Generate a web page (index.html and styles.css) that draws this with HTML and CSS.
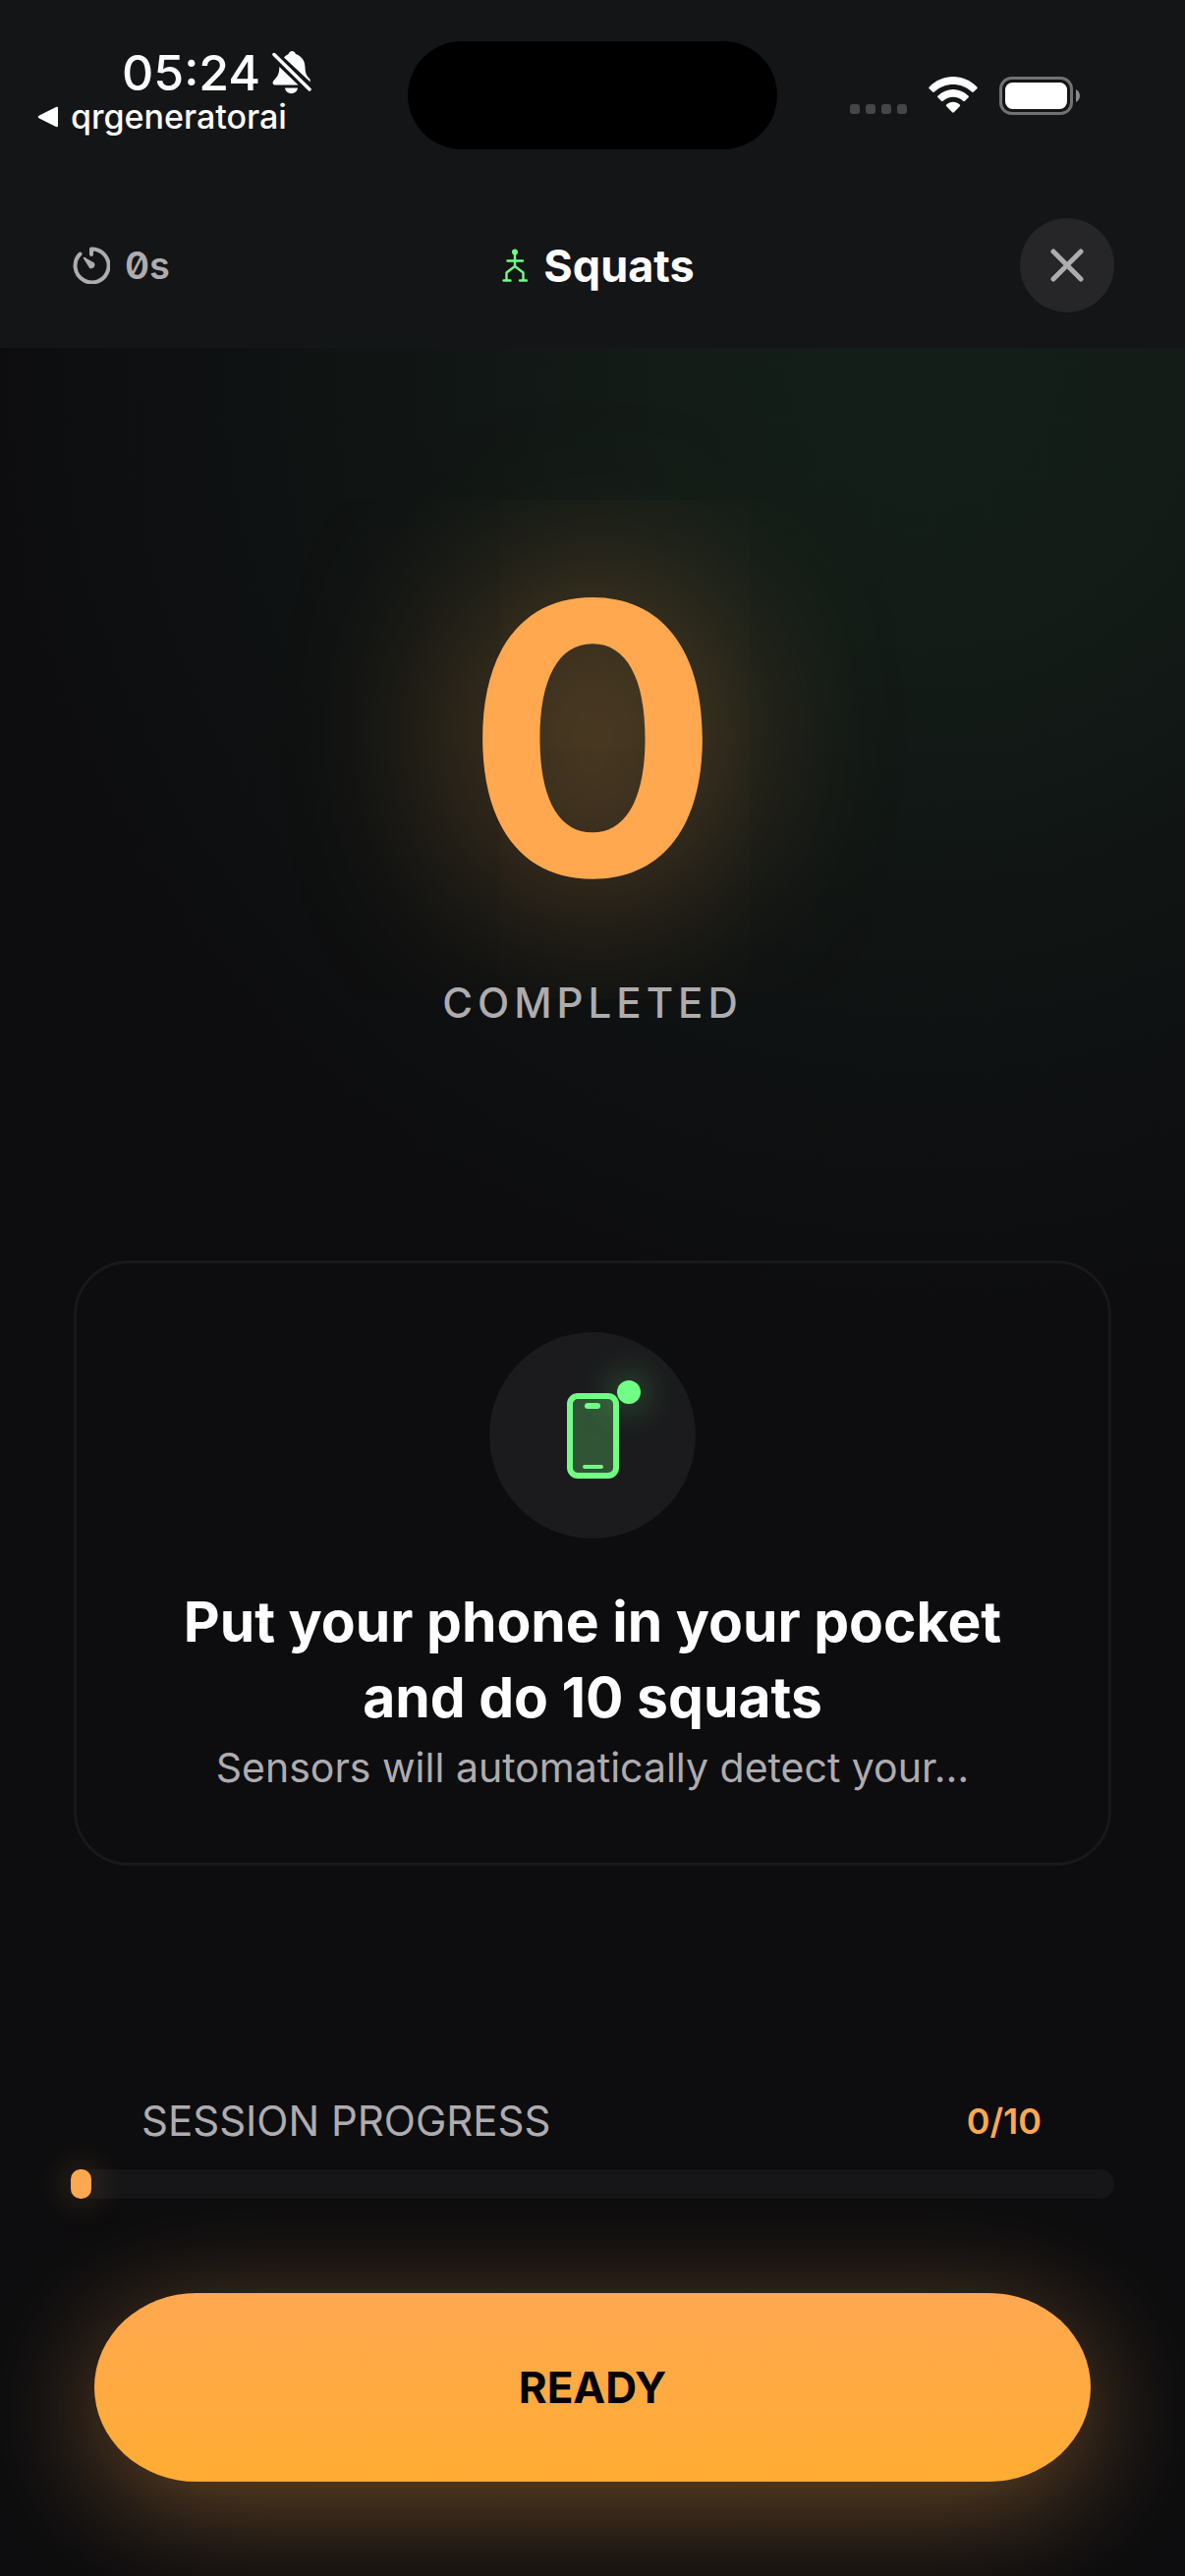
FILE: index.html
```html
<!DOCTYPE html>
<html lang="en">
<head>
  <meta charset="utf-8">
  <meta name="viewport" content="width=device-width, initial-scale=1">
  <title>Squats</title>
  <link rel="stylesheet" href="styles.css">
</head>
<body>
  <div class="top">
    <div class="status-bar">
      <div class="status-left">
        <div class="clock">
          <span>05:24</span>
          <svg class="bell-icon" viewBox="0 0 40 44" aria-hidden="true">
            <path d="M12 6.500C14 4 16 3.500 16.500 3c1.500-4 6-4 7.500 0 7 2.500 9.500 8 9.500 14 0 5 1.500 8.500 5 11.500l.3 3z" fill="#fff"/>
            <path d="M7.300 16 26.500 34.500H3C.5 34.500-.3 32 1.500 30c4-4 5.800-7 5.800-14z" fill="#fff"/>
            <path d="M13 37.500h13c-1 7.500-12 7.500-13 0z" fill="#fff"/>
            <path d="M2 3.500 38 39" stroke="#fff" stroke-width="3.500" stroke-linecap="round"/>
          </svg>
        </div>
        <a class="back-link" href="#">
          <svg class="back-icon" viewBox="0 0 22 22" aria-hidden="true"><path d="M2 9.500 19 1c1.500-.6 2 0 2 1.500v17c0 1.500-.5 2-2 1.500L2 12.500c-1.700-1-1.700-2 0-3z" fill="#fff"/></svg>
          <span>qrgeneratorai</span>
        </a>
      </div>
      <div class="island"></div>
      <div class="status-right">
        <svg class="signal-icon" viewBox="0 0 58 10" aria-hidden="true">
          <g fill="#464648"><rect width="10" height="10" rx="3"/><rect x="16" width="10" height="10" rx="3"/><rect x="32" width="10" height="10" rx="3"/><rect x="48" width="10" height="10" rx="3"/></g>
        </svg>
        <svg class="wifi-icon" viewBox="0 0 50 38" aria-hidden="true">
          <g fill="#fff">
            <path d="M.7 10.500C14-3.500 36-3.500 49.300 10.500c.6.600.6 1.200 0 1.700l-3.400 3.400c-.6.600-1.200.6-1.800 0-10.500-10.300-27.700-10.300-38.200 0-.6.600-1.200.6-1.800 0L.7 12.200c-.6-.5-.6-1.100 0-1.700z"/>
            <path d="M9.500 19.500c8.500-8.700 22.500-8.700 31 0 .6.600.6 1.200 0 1.800L37 24.700c-.6.600-1.200.6-1.800 0-5.800-5.200-14.600-5.200-20.400 0-.6.600-1.200.6-1.800 0l-3.500-3.400c-.6-.6-.6-1.200 0-1.800z"/>
            <path d="M18.300 28.500c3.900-3.700 9.500-3.700 13.400 0 .7.600.7 1.200 0 1.800l-5.800 6c-.6.600-1.200.6-1.800 0l-5.800-6c-.7-.6-.7-1.200 0-1.800z"/>
          </g>
        </svg>
        <svg class="battery-icon" viewBox="0 0 82 39" aria-hidden="true">
          <rect x="1.500" y="1.500" width="72" height="36" rx="11" fill="none" stroke="#727274" stroke-width="3"/>
          <rect x="6" y="6" width="63" height="27" rx="7.500" fill="#fff"/>
          <path d="M78 13c5.300 2.500 5.300 10.500 0 13z" fill="#8a8a8b"/>
        </svg>
      </div>
    </div>

    <header class="header">
      <div class="timer">
        <svg class="timer-icon" viewBox="0 0 38 38" fill="none" aria-hidden="true">
          <path d="M7.500 7.500A17 17 0 1 0 19 2.500V8" stroke="#aeacaf" stroke-width="4" stroke-linecap="round" stroke-linejoin="round"/>
          <path d="M11.500 11.500 21.500 17.200a3 3 0 0 1-4 4z" fill="#aeacaf" stroke="#aeacaf" stroke-width="1.500" stroke-linejoin="round"/>
        </svg>
        <span>0s</span>
      </div>
      <h1 class="title">
        <svg class="squat-icon" viewBox="0 0 26 34" fill="none" aria-hidden="true">
          <circle cx="13" cy="3.500" r="3" fill="#72fd85"/>
          <path d="M13 5v13.500M5.500 12.500h15.500M13 18 4.500 24.500v8M13 18l8.500 6.500v8M1.500 32.500h7M18 32.500h7" stroke="#72fd85" stroke-width="2.400" stroke-linecap="round" stroke-linejoin="round"/>
        </svg>
        <span>Squats</span>
      </h1>
      <button class="close" type="button" aria-label="Close">
        <svg class="close-icon" viewBox="0 0 34 34" aria-hidden="true"><path d="M3 3l28 28M31 3 3 31" stroke="#aeacaf" stroke-width="5" stroke-linecap="round"/></svg>
      </button>
    </header>
  </div>

  <main class="content">
    <section class="counter">
      <div class="count">0</div>
      <div class="count-label">COMPLETED</div>
    </section>

    <section class="card">
      <div class="phone-badge">
        <svg class="phone-icon" viewBox="0 0 53 87" aria-hidden="true">
          <rect x="3" y="3" width="47" height="81" rx="8" fill="#72fd85" fill-opacity=".25" stroke="#72fd85" stroke-width="6"/>
          <rect x="18" y="10" width="16" height="6" rx="3" fill="#72fd85"/>
          <rect x="16" y="73" width="21" height="4" rx="2" fill="#72fd85"/>
        </svg>
        <span class="phone-dot"></span>
      </div>
      <h2 class="card-title">Put your phone in your pocket and do 10 squats</h2>
      <p class="card-text">Sensors will automatically detect your…</p>
    </section>

    <section class="progress">
      <div class="progress-row">
        <span class="progress-label" id="progress-label">SESSION PROGRESS</span>
        <span class="progress-value">0/10</span>
      </div>
      <div class="progress-track" role="progressbar" aria-labelledby="progress-label" aria-valuemin="0" aria-valuemax="10" aria-valuenow="0">
        <div class="progress-fill" style="width: 2%"></div>
      </div>
    </section>

    <button class="ready" type="button">READY</button>
  </main>
</body>
</html>
```

FILE: styles.css
```css
* {
  box-sizing: border-box;
}

body {
  margin: 0;
  min-height: 100vh;
  display: flex;
  flex-direction: column;
  font-family: Inter, "Liberation Sans", sans-serif;
  color: #fff;
  background-color: #0d0d0f;
  background-image: radial-gradient(circle at 78% 380px, rgba(60, 130, 80, 0.15) 0, rgba(60, 130, 80, 0.13) 260px, rgba(60, 130, 80, 0.06) 580px, transparent 960px);
  overflow-x: hidden;
}

h1,
h2,
p {
  margin: 0;
}

svg {
  display: block;
  flex: none;
}

.top {
  background-color: #141517;
}

/* Status bar */
.status-bar {
  display: grid;
  grid-template-columns: 1fr 376px 1fr;
  align-items: center;
  height: 194px;
}

.status-left {
  padding: 0 0 6px 38px;
}

.clock {
  display: flex;
  align-items: center;
  gap: 12px;
  padding-left: 86px;
  font-size: 50px;
  line-height: 50px;
  font-weight: 500;
}

.bell-icon {
  width: 40px;
  height: 44px;
}

.back-link {
  display: flex;
  align-items: center;
  gap: 12px;
  color: #fff;
  font-size: 34px;
  line-height: 40px;
  font-weight: 500;
  text-decoration: none;
}

.back-icon {
  width: 22px;
  height: 22px;
}

.island {
  height: 110px;
  border-radius: 55px;
  background-color: #000;
}

.status-right {
  display: flex;
  align-items: center;
  gap: 22px;
  padding-left: 74px;
}

.signal-icon {
  width: 58px;
  height: 10px;
  margin-top: 28px;
}

.wifi-icon {
  width: 50px;
  height: 38px;
}

.battery-icon {
  width: 82px;
  height: 39px;
}

/* Header */
.header {
  display: grid;
  grid-template-columns: 1fr auto 1fr;
  align-items: center;
  padding: 28px 72px 36px;
}

.timer {
  display: flex;
  align-items: center;
  gap: 15px;
  padding-left: 2px;
  color: #aeacaf;
  font-size: 38px;
  font-weight: 600;
  font-feature-settings: "zero";
}

.timer-icon {
  width: 38px;
  height: 38px;
}

.title {
  display: flex;
  align-items: center;
  gap: 16px;
  padding-left: 12px;
  font-size: 45px;
  font-weight: 700;
}

.squat-icon {
  width: 26px;
  height: 34px;
}

.close {
  display: grid;
  place-items: center;
  justify-self: end;
  width: 96px;
  height: 96px;
  padding: 0;
  border: none;
  border-radius: 50%;
  background-color: #262628;
  cursor: pointer;
}

.close-icon {
  width: 34px;
  height: 34px;
}

/* Rep counter */
.content {
  flex: 1;
  display: flex;
  flex-direction: column;
  padding: 206px 72px 96px;
}

.counter {
  text-align: center;
}

.count {
  color: #ffa850;
  font-size: 384px;
  line-height: 384px;
  font-weight: 700;
  text-shadow: 0 0 180px rgba(255, 168, 80, 0.6);
}

.count-label {
  margin-top: 52px;
  color: #aeacaf;
  font-size: 42px;
  line-height: 50px;
  font-weight: 500;
  letter-spacing: 5px;
}

/* Instruction card */
.card {
  display: flex;
  flex-direction: column;
  align-items: center;
  margin: 237px 3px 0;
  padding: 70px 69px 64px;
  border: 3px solid #19191b;
  border-radius: 56px;
  text-align: center;
}

.phone-badge {
  position: relative;
  display: grid;
  place-items: center;
  width: 210px;
  height: 210px;
  border-radius: 50%;
  background-color: #1b1b1d;
}

.phone-icon {
  width: 53px;
  height: 87px;
}

.phone-dot {
  position: absolute;
  top: 49px;
  right: 56px;
  width: 24px;
  height: 24px;
  border-radius: 50%;
  background-color: #72fd85;
  box-shadow: 0 0 36px rgba(114, 253, 133, 0.6);
}

.card-title {
  max-width: 900px;
  margin-top: 46px;
  font-size: 57px;
  line-height: 77px;
  font-weight: 700;
}

.card-text {
  color: #aeacaf;
  font-size: 41px;
  line-height: 66px;
}

/* Session progress */
.progress {
  margin-top: auto;
}

.progress-row {
  display: flex;
  align-items: center;
  justify-content: space-between;
  padding: 0 74px 0 72px;
}

.progress-label {
  color: #aeacaf;
  font-size: 42px;
  line-height: 50px;
}

.progress-value {
  color: #ffa850;
  font-size: 36px;
  font-weight: 600;
}

.progress-track {
  height: 30px;
  margin-top: 24px;
  border-radius: 15px;
  background-color: #161618;
}

.progress-fill {
  height: 100%;
  border-radius: 10px;
  background-color: #ffa850;
  box-shadow: 0 0 36px rgba(255, 168, 80, 0.35);
}

.ready {
  height: 192px;
  margin: 96px 24px 0;
  border: none;
  border-radius: 104px / 96px;
  background-image: linear-gradient(#ffa850, #ffac33);
  box-shadow: 0 24px 120px rgba(255, 168, 80, 0.4);
  color: #000;
  font-family: inherit;
  font-size: 44px;
  font-weight: 700;
  cursor: pointer;
}
```
